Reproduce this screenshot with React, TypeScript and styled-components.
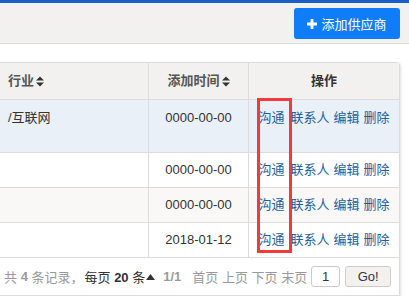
import React from 'react';
import styled, { createGlobalStyle } from 'styled-components';

const GlobalStyle = createGlobalStyle`
  html, body {
    margin: 0;
    padding: 0;
    background: #fff;
    font-family: "Liberation Sans", "Noto Sans CJK SC", sans-serif;
    font-size: 13px;
    color: #333;
  }
`;

const TopBar = styled.div`
  height: 3px;
  background: #1a5fc6;
`;

const Toolbar = styled.div`
  height: 40px;
  background: #f2f1ef;
  border-bottom: 1px solid #dcdcdc;
  display: flex;
  justify-content: flex-end;
  align-items: center;
  padding-right: 9px;
`;

const AddButton = styled.button`
  width: 106px;
  height: 31px;
  border: none;
  border-radius: 3px;
  background: #0f7cf8;
  color: #fff;
  font-family: inherit;
  font-size: 13px;
  display: flex;
  align-items: center;
  justify-content: center;
  gap: 4px;
  padding: 0;
  margin-top: 1px;
`;

const Card = styled.div`
  position: relative;
  margin-top: 18px;
  width: 399px;
  border: 1px solid #dcdcdc;
  border-left: none;
  border-top-right-radius: 4px;
  box-shadow: 1px 1px 3px rgba(0, 0, 0, 0.12);
`;

const Row = styled.div<{ $bg: string; $h: number }>`
  display: grid;
  grid-template-columns: 149px 100px 150px;
  height: ${(p) => p.$h}px;
  background: ${(p) => p.$bg};
  border-bottom: 1px solid #dcdcdc;
  box-sizing: border-box;
`;

const Cell = styled.div<{ $align?: string; $top?: boolean; $last?: boolean }>`
  display: flex;
  align-items: ${(p) => (p.$top ? 'flex-start' : 'center')};
  justify-content: ${(p) => p.$align || 'flex-start'};
  padding: ${(p) => (p.$top ? '9px 8px 0' : '0 8px')};
  border-right: ${(p) => (p.$last ? 'none' : '1px solid #dcdcdc')};
  white-space: nowrap;
  line-height: 18px;
`;

const HeadText = styled.span<{ $dark?: boolean }>`
  font-weight: bold;
  color: ${(p) => (p.$dark ? '#333' : '#555')};
  display: flex;
  align-items: center;
  gap: 2px;
`;

const Link = styled.a<{ $gap?: number }>`
  color: #225f9e;
  text-decoration: none;
  margin-right: ${(p) => p.$gap ?? 4}px;
  &:last-child {
    margin-right: 0;
  }
`;

const Footer = styled.div`
  height: 37px;
  display: flex;
  align-items: center;
  padding-left: 4px;
  color: #9a9a9a;
  white-space: nowrap;
`;

const Strong = styled.b<{ $dark?: boolean }>`
  color: ${(p) => (p.$dark ? '#333' : '#9a9a9a')};
`;

const Dark = styled.span`
  color: #333;
  margin-left: 1px;
`;

const Pager = styled.span<{ $gap: number }>`
  margin-left: ${(p) => p.$gap}px;
`;

const PageInput = styled.input`
  width: 29px;
  height: 21px;
  box-sizing: border-box;
  margin-left: 4px;
  border: 1px solid #ccc;
  border-radius: 3px;
  text-align: center;
  font-family: inherit;
  font-size: 13px;
  color: #333;
  padding: 0;
`;

const GoButton = styled.button`
  width: 46px;
  height: 21px;
  margin-left: 5px;
  border: 1px solid #ccc;
  border-radius: 3px;
  background: #f2f1ef;
  font-family: inherit;
  font-size: 13px;
  color: #333;
  padding: 0;
`;

const Highlight = styled.div`
  position: absolute;
  left: 257px;
  top: 35px;
  width: 35px;
  height: 155px;
  border: 3px solid #f23a3a;
  box-sizing: border-box;
  pointer-events: none;
`;

const SortIcon = () => (
  <svg width="8" height="11" viewBox="0 0 8 11">
    <path d="M0 4.5 L4 0.5 L8 4.5 Z M0 6.5 L4 10.5 L8 6.5 Z" fill="#333" />
  </svg>
);

const Plus = () => (
  <svg width="10" height="10" viewBox="0 0 10 10">
    <path d="M3.6 0h2.8v3.6H10v2.8H6.4V10H3.6V6.4H0V3.6h3.6z" fill="#fff" />
  </svg>
);

const rows = [
  { industry: '/互联网', date: '0000-00-00', bg: '#e9f0f8', h: 53, top: true },
  { industry: '', date: '0000-00-00', bg: '#fff', h: 35 },
  { industry: '', date: '0000-00-00', bg: '#f9f8f7', h: 35 },
  { industry: '', date: '2018-01-12', bg: '#fff', h: 35 },
];

export default function App() {
  return (
    <>
      <GlobalStyle />
      <TopBar />
      <Toolbar>
        <AddButton>
          <Plus />
          添加供应商
        </AddButton>
      </Toolbar>
      <Card>
        <Row $bg="#f2f1ef" $h={37}>
          <Cell>
            <HeadText>行业<SortIcon /></HeadText>
          </Cell>
          <Cell $align="center">
            <HeadText>添加时间<SortIcon /></HeadText>
          </Cell>
          <Cell $align="center" $last>
            <HeadText $dark>操作</HeadText>
          </Cell>
        </Row>
        {rows.map((r, i) => (
          <Row key={i} $bg={r.bg} $h={r.h}>
            <Cell $top={r.top}>{r.industry}</Cell>
            <Cell $align="center" $top={r.top}>{r.date}</Cell>
            <Cell $align="center" $top={r.top} $last>
              <Link $gap={6}>沟通</Link>
              <Link>联系人</Link>
              <Link>编辑</Link>
              <Link>删除</Link>
            </Cell>
          </Row>
        ))}
        <Footer>
          共 <Strong>&nbsp;4&nbsp;</Strong> 条记录，
          <Dark>
            每页 <Strong $dark>20</Strong> 条
          </Dark>
          <svg width="9" height="6" viewBox="0 0 9 6" style={{ marginLeft: 1 }}>
            <path d="M0 6 L4.5 0 L9 6 Z" fill="#333" />
          </svg>
          <Pager $gap={8}>
            <Strong>1/1</Strong>
          </Pager>
          <Pager $gap={11}>首页 上页 下页 末页</Pager>
          <PageInput defaultValue="1" />
          <GoButton>Go!</GoButton>
        </Footer>
        <Highlight />
      </Card>
    </>
  );
}
